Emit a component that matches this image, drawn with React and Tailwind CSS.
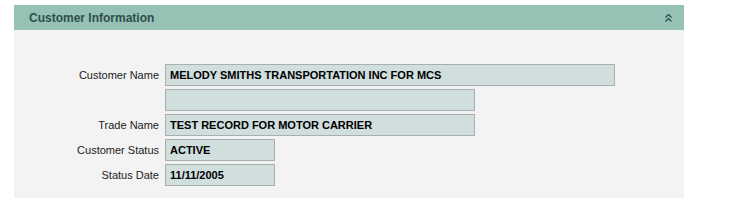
export default function App() {
  const rows = [
    { label: 'Customer Name', value: 'MELODY SMITHS TRANSPORTATION INC FOR MCS', w: 'w-[450px]' },
    { label: '', value: '', w: 'w-[310px]' },
    { label: 'Trade Name', value: 'TEST RECORD FOR MOTOR CARRIER', w: 'w-[310px]' },
    { label: 'Customer Status', value: 'ACTIVE', w: 'w-[110px]' },
    { label: 'Status Date', value: '11/11/2005', w: 'w-[110px]' },
  ]

  return (
    <div className="w-[731px] h-[210px] bg-white pt-[5px] pl-[14px] font-['Liberation_Sans',Arial,sans-serif]">
      <div className="w-[670px] bg-[#f3f3f3]">
        {/* Header */}
        <div className="h-[25px] bg-[#96c1b5] flex items-center justify-between pl-[15px] pr-[12px]">
          <span className="text-[12px] font-bold text-[#2f4f4c]">Customer Information</span>
          <svg width="7" height="8" viewBox="0 0 7 8" className="text-[#2f4f4c]">
            <path d="M0.5 3.5 L3.5 0.5 L6.5 3.5 M0.5 7.5 L3.5 4.5 L6.5 7.5" fill="none" stroke="currentColor" strokeWidth="1.3" />
          </svg>
        </div>

        {/* Body */}
        <div className="pt-[34px] pb-[12px] flex flex-col gap-[3px]">
          {rows.map((r, i) => (
            <div key={i} className="flex items-center">
              <div className="w-[151px] pr-[6px] text-right text-[11px] text-[#222]">{r.label}</div>
              <div className={`${r.w} h-[22px] bg-[#d0dfde] border border-[#a9aeae] px-[4px] flex items-center text-[11px] font-bold text-black`}>
                {r.value}
              </div>
            </div>
          ))}
        </div>
      </div>
    </div>
  )
}
